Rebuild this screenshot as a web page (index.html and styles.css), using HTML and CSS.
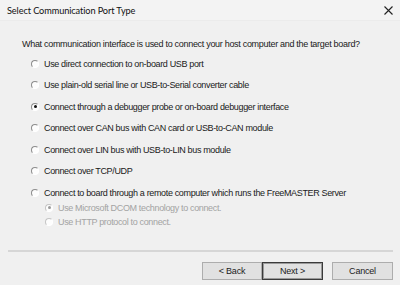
FILE: index.html
```html
<!DOCTYPE html>
<html lang="en">
<head>
	<meta charset="UTF-8">
	<title>Select Communication Port Type</title>
	<link rel="stylesheet" href="styles.css">
</head>
<body>
	<div class="dialog">
		<div class="titlebar">
			<span class="title">Select Communication Port Type</span>
			<span class="close">
				<svg width="9" height="9" viewBox="0 0 9 9"><path d="M0.5 0.5 L8.5 8.5 M8.5 0.5 L0.5 8.5" stroke="#222" stroke-width="1.1"/></svg>
			</span>
		</div>
		<div class="content">
			<p class="question">What communication interface is used to connect your host computer and the target board?</p>
			<div class="options">
				<div class="option"><span class="radio"></span>Use direct connection to on-board USB port</div>
				<div class="option"><span class="radio"></span>Use plain-old serial line or USB-to-Serial converter cable</div>
				<div class="option"><span class="radio checked"></span>Connect through a debugger probe or on-board debugger interface</div>
				<div class="option"><span class="radio"></span>Connect over CAN bus with CAN card or USB-to-CAN module</div>
				<div class="option"><span class="radio"></span>Connect over LIN bus with USB-to-LIN bus module</div>
				<div class="option"><span class="radio"></span>Connect over TCP/UDP</div>
				<div class="option"><span class="radio"></span>Connect to board through a remote computer which runs the FreeMASTER Server</div>
				<div class="suboptions">
					<div class="option sub disabled"><span class="radio checked"></span>Use Microsoft DCOM technology to connect.</div>
					<div class="option sub disabled"><span class="radio"></span>Use HTTP protocol to connect.</div>
				</div>
			</div>
		</div>
		<div class="separator"></div>
		<div class="buttons">
			<button type="button" class="btn">&lt; Back</button>
			<button type="button" class="btn default">Next &gt;</button>
			<button type="button" class="btn cancel">Cancel</button>
		</div>
	</div>
</body>
</html>
```
FILE: styles.css
```css
body{
	margin: 0;
	background-color: #f0f0f0;
	font-family: "Liberation Sans", Arial, sans-serif;
	font-size: 9px;
	letter-spacing: -0.35px;
	color: #1a1a1a;
}
.dialog{
	width: 400px;
	height: 285px;
	display: flex;
	flex-direction: column;
}
.titlebar{
	height: 20px;
	flex-shrink: 0;
	display: flex;
	align-items: center;
	justify-content: space-between;
	padding: 0 7px 0 7px;
	background-color: #f3f3f3;
	border-bottom: 1px solid #ebebeb;
}
.title{
	font-family: Lato, "Liberation Sans", sans-serif;
	font-size: 9.2px;
	letter-spacing: -0.1px;
	color: #111;
}
.close{
	display: flex;
	padding-top: 1px;
}
.content{
	padding: 0 0 0 22px;
	white-space: nowrap;
}
.question{
	margin: 17px 0 3px;
	line-height: 12px;
	letter-spacing: -0.3px;
}
.option{
	height: 21.5px;
	display: flex;
	align-items: center;
	padding-left: 9px;
}
.suboptions{
	margin-top: -3px;
}
.option.sub{
	height: 14px;
	padding-left: 23px;
	color: #a3a3a3;
}
.radio{
	width: 6px;
	height: 6px;
	border-radius: 50%;
	border: 1px solid #fff;
	border-top-color: #8c8c8c;
	border-left-color: #8c8c8c;
	background-color: #fdfdfd;
	margin-right: 5px;
	position: relative;
	flex-shrink: 0;
}
.radio.checked::after{
	content: "";
	position: absolute;
	left: 1.5px;
	top: 1.5px;
	width: 3px;
	height: 3px;
	border-radius: 50%;
	background-color: #111;
}
.disabled .radio{
	border-top-color: #c4c4c4;
	border-left-color: #c4c4c4;
}
.disabled .radio.checked::after{
	background-color: #9a9a9a;
}
.separator{
	margin: 21px 7px 0 8px;
	height: 2px;
	flex-shrink: 0;
	background-color: #d6d6d6;
}
.buttons{
	display: flex;
	justify-content: flex-end;
	padding: 10px 7px 0 0;
}
.btn{
	height: 18px;
	width: 60px;
	padding: 0;
	font-family: "Liberation Sans", Arial, sans-serif;
	font-size: 9px;
	letter-spacing: -0.2px;
	color: #222;
	background-color: #e1e1e1;
	border: 1px solid #adadad;
}
.btn.default{
	width: 61px;
	border: 1px solid #3a3a3a;
	box-shadow: inset 0 0 0 1px #9a9a9a;
}
.btn.cancel{
	margin-left: 9px;
	width: 61px;
}
```
